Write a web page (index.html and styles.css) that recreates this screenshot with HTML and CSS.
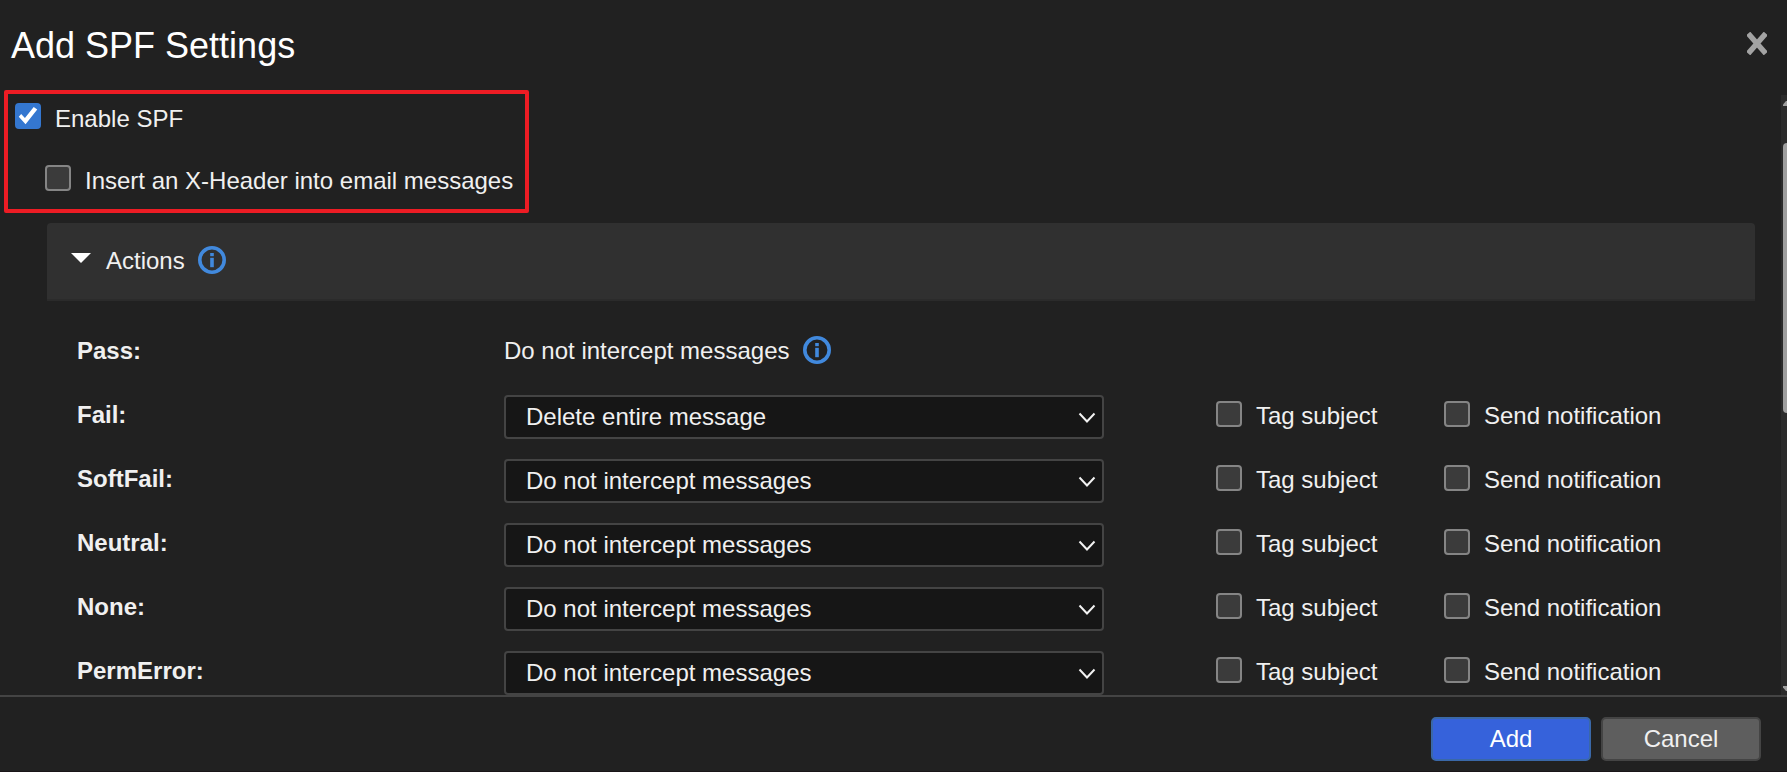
FILE: index.html
```html
<!DOCTYPE html>
<html lang="en">
<head>
<meta charset="utf-8">
<title>Add SPF Settings</title>
<link rel="stylesheet" href="styles.css">
</head>
<body>
<svg class="defs" aria-hidden="true">
  <symbol id="info" viewBox="0 0 28 28">
    <circle cx="14" cy="14" r="12.2" fill="none" stroke="#4189dd" stroke-width="3.6"/>
    <rect x="12.2" y="7" width="3.6" height="3.2" fill="#4189dd"/>
    <rect x="12.2" y="11.8" width="3.6" height="9.400" fill="#4189dd"/>
  </symbol>
  <symbol id="chevron" viewBox="0 0 18 12">
    <path d="M1.5 1.5 9 9.5l7.500-8" fill="none" stroke="#f2f2f2" stroke-width="2"/>
  </symbol>
</svg>
<form class="dialog">
  <header class="header">
    <h1 class="title">Add SPF Settings</h1>
    <button type="button" class="close" aria-label="Close">
      <svg viewBox="0 0 20 23" width="20" height="23"><path d="M3 3.500 17 19.500M17 3.500 3 19.500" stroke="#a3a3a3" stroke-width="5.400" stroke-linecap="square"/></svg>
    </button>
  </header>
  <div class="body">
    <main class="content">
      <div class="highlight">
        <label class="check"><input type="checkbox" class="box" checked>Enable SPF</label>
        <label class="check nested"><input type="checkbox" class="box">Insert an X-Header into email messages</label>
      </div>
      <section class="actions">
        <div class="panel">
          <button type="button" class="toggle" aria-expanded="true"><span class="caret"></span>Actions</button>
          <svg class="info"><use href="#info"/></svg>
        </div>
        <div class="rows">
          <div class="row">
            <span class="name">Pass:</span>
            <span class="value">Do not intercept messages <svg class="info"><use href="#info"/></svg></span>
          </div>
          <div class="row">
            <label class="name" for="fail">Fail:</label>
            <div class="picker"><select id="fail" class="select"><option>Delete entire message</option><option>Do not intercept messages</option></select><svg class="chevron"><use href="#chevron"/></svg></div>
            <label class="check"><input type="checkbox" class="box">Tag subject</label>
            <label class="check"><input type="checkbox" class="box">Send notification</label>
          </div>
          <div class="row">
            <label class="name" for="softfail">SoftFail:</label>
            <div class="picker"><select id="softfail" class="select"><option>Do not intercept messages</option><option>Delete entire message</option></select><svg class="chevron"><use href="#chevron"/></svg></div>
            <label class="check"><input type="checkbox" class="box">Tag subject</label>
            <label class="check"><input type="checkbox" class="box">Send notification</label>
          </div>
          <div class="row">
            <label class="name" for="neutral">Neutral:</label>
            <div class="picker"><select id="neutral" class="select"><option>Do not intercept messages</option><option>Delete entire message</option></select><svg class="chevron"><use href="#chevron"/></svg></div>
            <label class="check"><input type="checkbox" class="box">Tag subject</label>
            <label class="check"><input type="checkbox" class="box">Send notification</label>
          </div>
          <div class="row">
            <label class="name" for="none">None:</label>
            <div class="picker"><select id="none" class="select"><option>Do not intercept messages</option><option>Delete entire message</option></select><svg class="chevron"><use href="#chevron"/></svg></div>
            <label class="check"><input type="checkbox" class="box">Tag subject</label>
            <label class="check"><input type="checkbox" class="box">Send notification</label>
          </div>
          <div class="row">
            <label class="name" for="permerror">PermError:</label>
            <div class="picker"><select id="permerror" class="select"><option>Do not intercept messages</option><option>Delete entire message</option></select><svg class="chevron"><use href="#chevron"/></svg></div>
            <label class="check"><input type="checkbox" class="box">Tag subject</label>
            <label class="check"><input type="checkbox" class="box">Send notification</label>
          </div>
        </div>
      </section>
    </main>
    <div class="scrollbar" aria-hidden="true">
      <svg class="arrow" viewBox="0 0 4 6"><path d="M0 5V3.500L3 0H4V5Z"/></svg>
      <div class="track"><div class="thumb"></div></div>
      <svg class="arrow" viewBox="0 0 4 6"><path d="M0 1V2.500L3 6H4V1Z"/></svg>
    </div>
  </div>
  <footer class="footer">
    <button type="submit" class="button primary">Add</button>
    <button type="button" class="button">Cancel</button>
  </footer>
</form>
</body>
</html>
```

FILE: styles.css
```css
* {
  box-sizing: border-box;
}

body {
  margin: 0;
  background: #212121;
  color: #f0f0f0;
  font: 24px/30px "Liberation Sans", Arial, sans-serif;
}

.defs {
  display: none;
}

button,
select {
  color: inherit;
  font: inherit;
}

.dialog {
  display: flex;
  flex-direction: column;
  height: 100vh;
  border-bottom: 1px solid #1a1518;
}

.header {
  display: flex;
  flex: none;
  align-items: flex-start;
  justify-content: space-between;
  padding: 25px 20px 23px 11px;
}

.title {
  margin: 0;
  color: #fff;
  font-size: 36px;
  font-weight: 400;
  line-height: 42px;
}

.close {
  display: flex;
  margin-top: 7px;
  padding: 0;
  border: 0;
  background: none;
}

.body {
  display: flex;
  flex: 1;
  min-height: 0;
}

.content {
  flex: 1;
  min-width: 0;
  padding-left: 4px;
  overflow: hidden;
}

.highlight {
  display: flex;
  flex-direction: column;
  gap: 30px;
  width: fit-content;
  padding: 9px 12px 12px 7px;
  border: 4px solid #ed1c24;
  border-radius: 2px;
  line-height: 32px;
}

.nested {
  margin-left: 30px;
}

.check {
  display: flex;
  align-items: flex-start;
  gap: 14px;
  white-space: nowrap;
}

.box {
  flex: none;
  width: 26px;
  height: 26px;
  margin: 0;
  border: 2px solid #858585;
  border-radius: 4px;
  background: #3b3b3b;
  appearance: none;
}

.box:checked {
  border-color: #3477d0;
  background: #3477d0;
}

.box:checked::before {
  display: block;
  width: 22px;
  height: 22px;
  background: #fff;
  clip-path: polygon(8% 53%, 19% 41%, 36% 59%, 76% 9%, 92% 21%, 39% 87%);
  content: "";
}

.actions {
  margin: 10px 26px 0 43px;
}

.panel {
  display: flex;
  align-items: flex-start;
  gap: 13px;
  padding: 23px 24px;
  border-bottom: 2px solid #2b2b2b;
  border-radius: 4px 4px 0 0;
  background: #303030;
}

.toggle {
  display: flex;
  align-items: center;
  gap: 15px;
  padding: 0;
  border: 0;
  background: none;
}

.caret {
  width: 20px;
  height: 10px;
  margin-bottom: 6px;
  background: #fff;
  clip-path: polygon(0 0, 100% 0, 50% 100%);
}

.info {
  flex: none;
  width: 28px;
  height: 28px;
}

.rows {
  padding: 30px 0 0 30px;
}

.row {
  display: grid;
  grid-template-columns: 427fr 712fr 228fr 311fr;
  min-height: 64px;
}

.name {
  padding-top: 5px;
  font-weight: 700;
}

.value {
  display: flex;
  gap: 14px;
  padding-top: 5px;
}

.picker {
  position: relative;
  height: 44px;
  margin-right: 112px;
}

.select {
  width: 100%;
  height: 44px;
  padding: 0 40px 0 20px;
  border: 2px solid #444;
  border-radius: 4px;
  background: #161616;
  appearance: none;
}

.chevron {
  position: absolute;
  top: 17px;
  right: 8px;
  width: 18px;
  height: 12px;
  pointer-events: none;
}

.row .check {
  padding-top: 6px;
}

.scrollbar {
  display: flex;
  flex: none;
  flex-direction: column;
  width: 6px;
  margin-top: 5px;
  padding: 6px 0 4px 2px;
  background: #2b2b2b;
}

.arrow {
  width: 4px;
  height: 6px;
  fill: #9f9f9f;
}

.track {
  flex: 1;
  padding: 36px 0;
}

.thumb {
  height: 270px;
  border-radius: 4px 0 0 4px;
  background: #9f9f9f;
}

.footer {
  display: flex;
  flex: none;
  justify-content: flex-end;
  gap: 10px;
  padding: 20px 26px 10px;
  border-top: 2px solid #444;
}

.button {
  width: 160px;
  height: 44px;
  padding: 0;
  border: 2px solid #444;
  border-radius: 5px;
  background: #5e5e5e;
}

.primary {
  border-color: #3a68a8;
  background: #3662db;
  color: #fff;
}
```
